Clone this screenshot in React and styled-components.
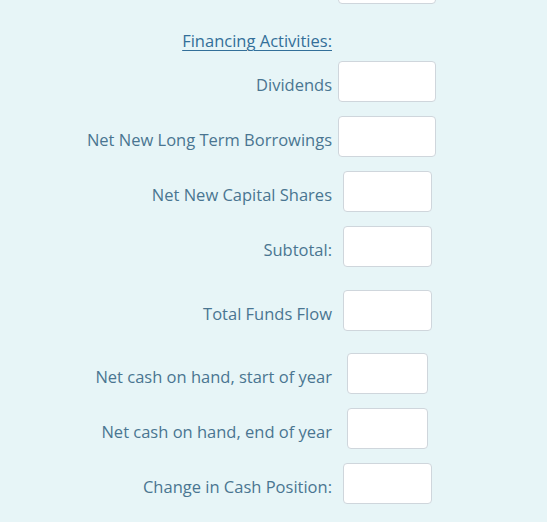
import React from "react";
import styled, { createGlobalStyle } from "styled-components";

const GlobalStyle = createGlobalStyle`
  html, body {
    margin: 0;
    padding: 0;
    background: #e7f5f7;
    overflow: hidden;
  }
  body {
    font-family: "Open Sans", "Noto Sans", "Liberation Sans", sans-serif;
  }
`;

const Page = styled.div`
  width: 547px;
  height: 522px;
  background: #e7f5f7;
  overflow: hidden;
`;

const Form = styled.div`
  display: flex;
  flex-direction: column;
  margin-top: -37px;
`;

const Row = styled.div`
  display: grid;
  grid-template-columns: 332px 98px;
  column-gap: 6px;
  align-items: center;
  height: 41px;
  margin-top: ${(p) => p.$gap || 0}px;
`;

const Label = styled.label`
  text-align: right;
  font-size: 16.5px;
  color: #4a7591;
  padding-top: 5px;
  white-space: nowrap;
`;

const Heading = styled.div`
  grid-column: 1;
  text-align: right;
  font-size: 16.5px;
  color: #336f99;
  text-decoration: underline;
  text-underline-offset: 3px;
  text-decoration-thickness: 1px;
  white-space: nowrap;
`;

const Field = styled.input`
  justify-self: center;
  box-sizing: border-box;
  width: ${(p) => p.$w}px;
  height: 41px;
  margin: 0;
  padding: 4px 8px;
  background: #ffffff;
  border: 1px solid #cfd6dc;
  border-radius: 4px;
  outline: none;
`;

const rows = [
  { label: "Dividends", w: 98, gap: 0 },
  { label: "Net New Long Term Borrowings", w: 98, gap: 14 },
  { label: "Net New Capital Shares", w: 89, gap: 14 },
  { label: "Subtotal:", w: 89, gap: 14 },
  { label: "Total Funds Flow", w: 89, gap: 23 },
  { label: "Net cash on hand, start of year", w: 81, gap: 22 },
  { label: "Net cash on hand, end of year", w: 81, gap: 14 },
  { label: "Change in Cash Position:", w: 89, gap: 14 },
];

const App = () => {
  return (
    <Page>
      <GlobalStyle />
      <Form>
        <Row>
          <span />
          <Field $w={98} />
        </Row>
        <Row $gap={16}>
          <Heading>Financing Activities:</Heading>
        </Row>
        {rows.map((r) => (
          <Row key={r.label} $gap={r.gap}>
            <Label>{r.label}</Label>
            <Field $w={r.w} />
          </Row>
        ))}
      </Form>
    </Page>
  );
};

export default App;
